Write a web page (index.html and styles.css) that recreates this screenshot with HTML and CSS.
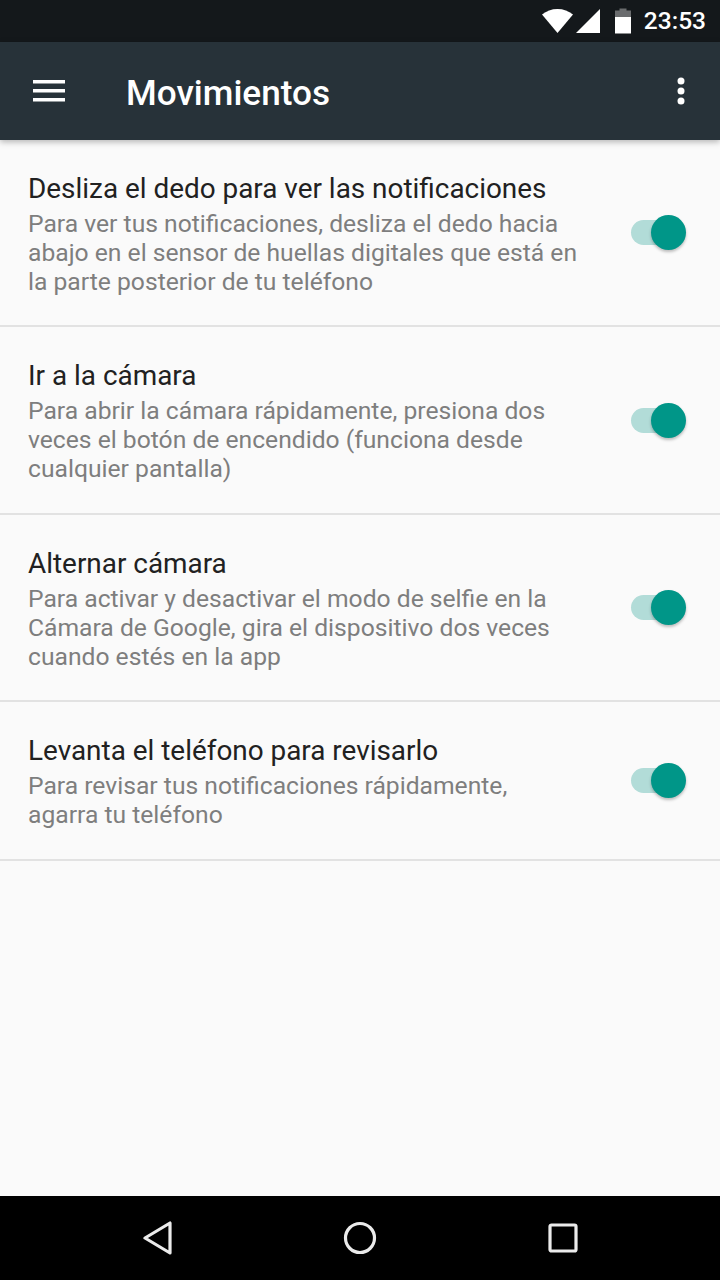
FILE: index.html
```html
<!DOCTYPE html>
<html lang="es">
<head>
<meta charset="utf-8">
<title>Movimientos</title>
<link rel="stylesheet" href="styles.css">
</head>
<body>
<div class="screen">
  <div class="statusbar">
    <svg class="ic-wifi" width="31" height="24" viewBox="0 0 31 24"><path d="M0 5.500C4.500 2 9.500 0 15.500 0S26.500 2 31 5.500L15.500 24z" fill="#fff"/></svg>
    <svg class="ic-signal" width="24" height="24" viewBox="0 0 24 24"><path d="M24 0V24H0z" fill="#fff"/></svg>
    <svg class="ic-battery" width="16" height="26" viewBox="0 0 16 26"><path d="M4.500 0.500H11.500V2.500H16V9H0V2.500H4.500z" fill="#6a6c6e"/><path d="M0 9H16V25.500H0z" fill="#fff"/></svg>
    <span class="clock">23:53</span>
  </div>
  <header class="appbar">
    <svg class="ic-menu" width="32" height="22" viewBox="0 0 32 22"><path d="M0 0H32V3.500H0zM0 9H32V12.500H0zM0 18H32V21.500H0z" fill="#fff"/></svg>
    <h1 class="appbar-title">Movimientos</h1>
    <svg class="ic-more" width="8" height="28" viewBox="0 0 8 28"><circle cx="4" cy="4" r="3.500" fill="#fff"/><circle cx="4" cy="14" r="3.500" fill="#fff"/><circle cx="4" cy="24" r="3.500" fill="#fff"/></svg>
  </header>
  <main class="list">
    <div class="row">
      <div class="row-text">
        <div class="row-title">Desliza el dedo para ver las notificaciones</div>
        <div class="row-sub">Para ver tus notificaciones, desliza el dedo hacia<br>abajo en el sensor de huellas digitales que está en<br>la parte posterior de tu teléfono</div>
      </div>
      <div class="switch"><span class="track"></span><span class="thumb"></span></div>
    </div>
    <div class="row">
      <div class="row-text">
        <div class="row-title">Ir a la cámara</div>
        <div class="row-sub">Para abrir la cámara rápidamente, presiona dos<br>veces el botón de encendido (funciona desde<br>cualquier pantalla)</div>
      </div>
      <div class="switch"><span class="track"></span><span class="thumb"></span></div>
    </div>
    <div class="row">
      <div class="row-text">
        <div class="row-title">Alternar cámara</div>
        <div class="row-sub">Para activar y desactivar el modo de selfie en la<br>Cámara de Google, gira el dispositivo dos veces<br>cuando estés en la app</div>
      </div>
      <div class="switch"><span class="track"></span><span class="thumb"></span></div>
    </div>
    <div class="row">
      <div class="row-text">
        <div class="row-title">Levanta el teléfono para revisarlo</div>
        <div class="row-sub">Para revisar tus notificaciones rápidamente,<br>agarra tu teléfono</div>
      </div>
      <div class="switch"><span class="track"></span><span class="thumb"></span></div>
    </div>
  </main>
  <nav class="navbar">
    <svg width="30" height="34" viewBox="0 0 30 34"><path d="M28 2V32L3 17z" fill="none" stroke="#ebebeb" stroke-width="3.200" stroke-linejoin="round"/></svg>
    <svg width="34" height="34" viewBox="0 0 34 34"><circle cx="17" cy="17" r="14.500" fill="none" stroke="#ebebeb" stroke-width="3.200"/></svg>
    <svg width="30" height="30" viewBox="0 0 30 30"><rect x="2" y="2" width="26" height="26" rx="1.500" fill="none" stroke="#ebebeb" stroke-width="3.200"/></svg>
  </nav>
</div>
</body>
</html>
```
FILE: styles.css
```css
* { box-sizing: border-box; }
html, body { margin: 0; padding: 0; }
body { font-family: Roboto, "Noto Sans", sans-serif; background: #fafafa; }
.screen { width: 720px; height: 1280px; display: flex; flex-direction: column; overflow: hidden; }

.statusbar { height: 42px; flex: none; background: #14181b; display: flex; align-items: center; justify-content: flex-end; padding-right: 14px; color: #fff; }
.ic-wifi { margin-right: 3px; }
.ic-signal { margin-right: 15px; }
.ic-battery { margin-right: 13px; }
.clock { font-size: 24.500px; font-weight: 500; line-height: 42px; }

.appbar { height: 98px; flex: none; background: #273239; display: flex; align-items: center; padding: 0 35px 0 33px; position: relative; box-shadow: 0 2px 6px rgba(0,0,0,.28); z-index: 1; }
.appbar-title { flex: 1; margin: 4px 0 0 61px; color: #fff; font-size: 35.150px; font-weight: 500; line-height: 40px; }

.list { flex: 1; display: flex; flex-direction: column; }
.row { display: flex; align-items: center; justify-content: space-between; padding: 32px 34px 29.400px 28px; border-bottom: 2px solid #e2e2e2; }
.row-title { font-size: 27.900px; line-height: 34px; color: #212121; }
.row-sub { margin-top: 3px; font-size: 24.660px; line-height: 29px; color: #7e7e7e; }

.switch { position: relative; width: 56px; height: 36px; flex: none; margin-bottom: 1.400px; }
.track { position: absolute; left: 1px; top: 5px; width: 50px; height: 25px; border-radius: 13px; background: #b2dcd8; }
.thumb { position: absolute; left: 21px; top: 0; width: 35px; height: 35px; border-radius: 50%; background: #009688; box-shadow: 0 2px 3px rgba(0,0,0,.25); }

.navbar { height: 84px; flex: none; background: #000; display: flex; align-items: center; justify-content: space-between; padding: 0 142px; }
```
